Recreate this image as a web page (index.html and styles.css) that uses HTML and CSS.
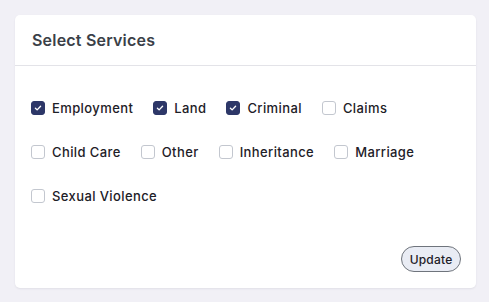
FILE: index.html
```html
<!DOCTYPE html>
<html>
<head>
<meta charset="utf-8">
<link rel="stylesheet" href="styles.css">
</head>
<body>
<div class="card">
  <div class="card-header">Select Services</div>
  <div class="card-body">
    <div class="options">
      <label class="opt"><span class="box checked"><svg viewBox="0 0 14 14"><path d="M4 7.2l2 2 4-4.2" fill="none" stroke="#fff" stroke-width="1.6" stroke-linecap="round" stroke-linejoin="round"/></svg></span>Employment</label>
      <label class="opt"><span class="box checked"><svg viewBox="0 0 14 14"><path d="M4 7.2l2 2 4-4.2" fill="none" stroke="#fff" stroke-width="1.6" stroke-linecap="round" stroke-linejoin="round"/></svg></span>Land</label>
      <label class="opt"><span class="box checked"><svg viewBox="0 0 14 14"><path d="M4 7.2l2 2 4-4.2" fill="none" stroke="#fff" stroke-width="1.6" stroke-linecap="round" stroke-linejoin="round"/></svg></span>Criminal</label>
      <label class="opt"><span class="box"></span>Claims</label>
      <label class="opt"><span class="box"></span>Child Care</label>
      <label class="opt"><span class="box"></span>Other</label>
      <label class="opt"><span class="box"></span>Inheritance</label>
      <label class="opt"><span class="box"></span>Marriage</label>
      <label class="opt"><span class="box"></span>Sexual Violence</label>
    </div>
    <div class="actions"><button class="btn">Update</button></div>
  </div>
</div>
</body>
</html>
```
FILE: styles.css
```css
html, body { margin: 0; padding: 0; }
body {
  background: #f1f0f6;
  font-family: "Inter", "Open Sans", sans-serif;
  color: #1f232b;
  padding: 15px 13px 13px 15px;
}
.card {
  background: #fff;
  border-radius: 5px;
  box-shadow: 0 1px 2px rgba(40, 40, 70, 0.08);
  height: 273px;
  display: flex;
  flex-direction: column;
}
.card-header {
  height: 51px;
  box-sizing: border-box;
  padding: 15px 17px 0;
  font-size: 16px;
  font-weight: 600;
  letter-spacing: 0.2px;
  color: #3b3f48;
  border-bottom: 1px solid #e3e3e8;
}
.card-body {
  flex: 1;
  padding: 33px 15px 16px 16px;
  display: flex;
  flex-direction: column;
}
.options {
  display: flex;
  flex-wrap: wrap;
  column-gap: 20px;
  row-gap: 26px;
  padding-right: 40px;
}
.opt {
  display: flex;
  align-items: center;
  gap: 7px;
  font-size: 13px;
  font-weight: 500;
  letter-spacing: 0.4px;
  line-height: 18px;
  color: #1d2027;
}
.box {
  width: 12px;
  height: 12px;
  border: 1px solid #c3c7cf;
  border-radius: 3px;
  background: #fff;
  display: flex;
}
.box.checked {
  background: #2d3768;
  border-color: #2d3768;
}
.box svg { width: 12px; height: 12px; }
.actions {
  margin-top: auto;
  display: flex;
  justify-content: flex-end;
}
.btn {
  font-family: inherit;
  font-size: 12px;
  font-weight: 500;
  letter-spacing: 0.2px;
  color: #1d2027;
  background: #e9ecf4;
  border: 1px solid #6f747c;
  border-radius: 13px;
  height: 26px;
  width: 60px;
  padding: 0;
}
```
